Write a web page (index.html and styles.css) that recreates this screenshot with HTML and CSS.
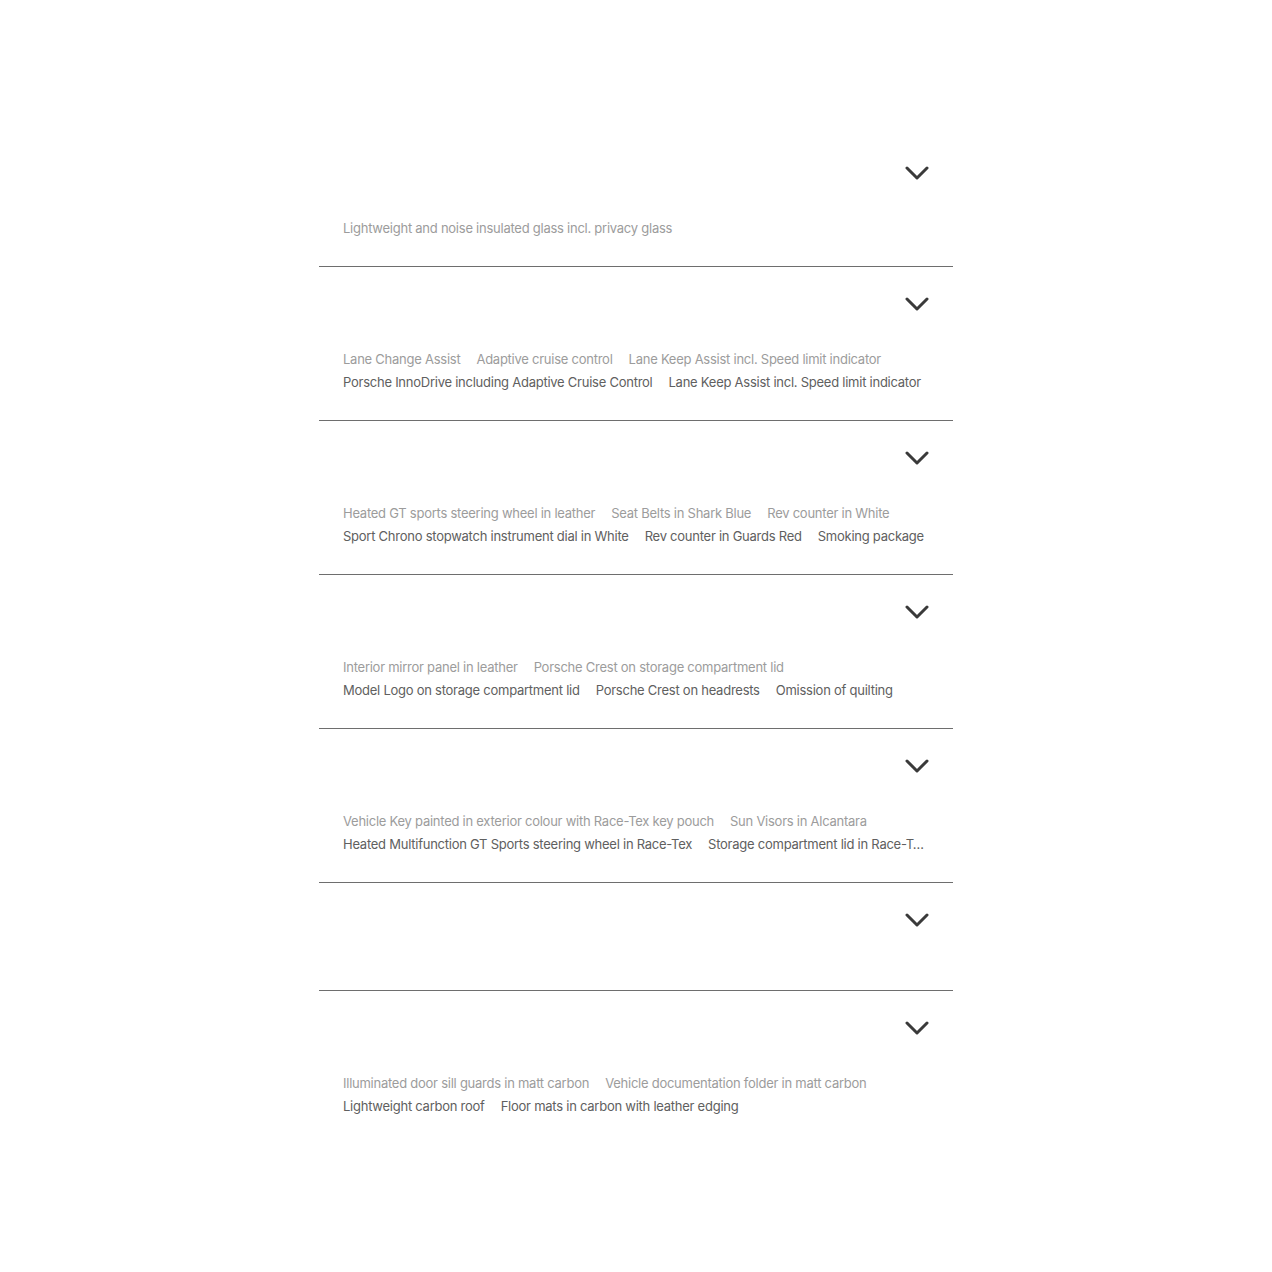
FILE: index.html
```html
<!DOCTYPE html>
<html lang="en">
<head>
  <meta charset="UTF-8" />
  <meta name="viewport" content="width=device-width, initial-scale=1.0"/>
  <title>Equipment</title>
  <link rel="stylesheet" href="styles.css">
</head>
<body>

  <div class="container">
    <!-- Glass -->
    <div class="section">
      <button type="button" class="section-head" aria-label="Glass">
        <svg class="chevron" viewBox="0 0 24 14"><path d="M2 2 L12 12 L22 2"/></svg>
      </button>
      <div class="summary">
        <ul class="chips light">
          <li>Lightweight and noise insulated glass incl. privacy glass</li>
        </ul>
      </div>
    </div>

    <!-- Assistance systems -->
    <div class="section">
      <button type="button" class="section-head" aria-label="Assistance systems">
        <svg class="chevron" viewBox="0 0 24 14"><path d="M2 2 L12 12 L22 2"/></svg>
      </button>
      <div class="summary">
        <ul class="chips light">
          <li>Lane Change Assist</li>
          <li>Adaptive cruise control</li>
          <li>Lane Keep Assist incl. Speed limit indicator</li>
        </ul>
        <ul class="chips dark">
          <li>Porsche InnoDrive including Adaptive Cruise Control</li>
          <li>Lane Keep Assist incl. Speed limit indicator</li>
        </ul>
      </div>
    </div>

    <!-- Interior colours -->
    <div class="section">
      <button type="button" class="section-head" aria-label="Interior colours">
        <svg class="chevron" viewBox="0 0 24 14"><path d="M2 2 L12 12 L22 2"/></svg>
      </button>
      <div class="summary">
        <ul class="chips light">
          <li>Heated GT sports steering wheel in leather</li>
          <li>Seat Belts in Shark Blue</li>
          <li>Rev counter in White</li>
        </ul>
        <ul class="chips dark">
          <li>Sport Chrono stopwatch instrument dial in White</li>
          <li>Rev counter in Guards Red</li>
          <li>Smoking package</li>
        </ul>
      </div>
    </div>

    <!-- Leather -->
    <div class="section">
      <button type="button" class="section-head" aria-label="Leather">
        <svg class="chevron" viewBox="0 0 24 14"><path d="M2 2 L12 12 L22 2"/></svg>
      </button>
      <div class="summary">
        <ul class="chips light">
          <li>Interior mirror panel in leather</li>
          <li>Porsche Crest on storage compartment lid</li>
        </ul>
        <ul class="chips dark">
          <li>Model Logo on storage compartment lid</li>
          <li>Porsche Crest on headrests</li>
          <li>Omission of quilting</li>
        </ul>
      </div>
    </div>

    <!-- Race-Tex -->
    <div class="section">
      <button type="button" class="section-head" aria-label="Race-Tex">
        <svg class="chevron" viewBox="0 0 24 14"><path d="M2 2 L12 12 L22 2"/></svg>
      </button>
      <div class="summary">
        <ul class="chips light">
          <li>Vehicle Key painted in exterior colour with Race-Tex key pouch</li>
          <li>Sun Visors in Alcantara</li>
        </ul>
        <ul class="chips dark">
          <li>Heated Multifunction GT Sports steering wheel in Race-Tex</li>
          <li class="clip">Storage compartment lid in Race-Tex</li>
        </ul>
      </div>
    </div>

    <!-- Empty group -->
    <div class="section">
      <button type="button" class="section-head" aria-label="Aluminium">
        <svg class="chevron" viewBox="0 0 24 14"><path d="M2 2 L12 12 L22 2"/></svg>
      </button>
      <div class="summary"></div>
    </div>

    <!-- Carbon -->
    <div class="section last">
      <button type="button" class="section-head" aria-label="Carbon">
        <svg class="chevron" viewBox="0 0 24 14"><path d="M2 2 L12 12 L22 2"/></svg>
      </button>
      <div class="summary">
        <ul class="chips light">
          <li>Illuminated door sill guards in matt carbon</li>
          <li>Vehicle documentation folder in matt carbon</li>
        </ul>
        <ul class="chips dark">
          <li>Lightweight carbon roof</li>
          <li>Floor mats in carbon with leather edging</li>
        </ul>
      </div>
    </div>
  </div>

</body>
</html>
```

FILE: styles.css
```css
* {
  box-sizing: border-box;
  margin: 0;
  padding: 0;
  font-family: 'Inter', 'Liberation Sans', sans-serif;
}

body {
  background: #fff;
  padding: 136px 0 0;
}

.container {
  width: 634px;
  margin: 0 auto;
}

.section {
  border-bottom: 1px solid #6e6e6e;
  padding: 23px 0 0;
}

.section.last {
  border-bottom: none;
}

.section-head {
  display: flex;
  justify-content: flex-end;
  align-items: center;
  width: 100%;
  height: 28px;
  padding-right: 24px;
  background: none;
  border: none;
  cursor: pointer;
}

.chevron {
  width: 24px;
  height: 14px;
  fill: none;
  stroke: #3a3a3a;
  stroke-width: 3;
  stroke-linecap: round;
  stroke-linejoin: round;
}

.summary {
  padding: 30px 24px 26px;
}

.chips {
  list-style: none;
  display: flex;
  flex-wrap: nowrap;
  gap: 16px;
  font-size: 13px;
  letter-spacing: -0.25px;
  line-height: 23px;
  white-space: nowrap;
  overflow: hidden;
}

.chips.light {
  color: #9c9c9c;
}

.chips.dark {
  color: #606060;
}

/* long last chip gets cut with an ellipsis */
.chips .clip {
  max-width: 216px;
  overflow: hidden;
  text-overflow: ellipsis;
  min-width: 0;
}
```
